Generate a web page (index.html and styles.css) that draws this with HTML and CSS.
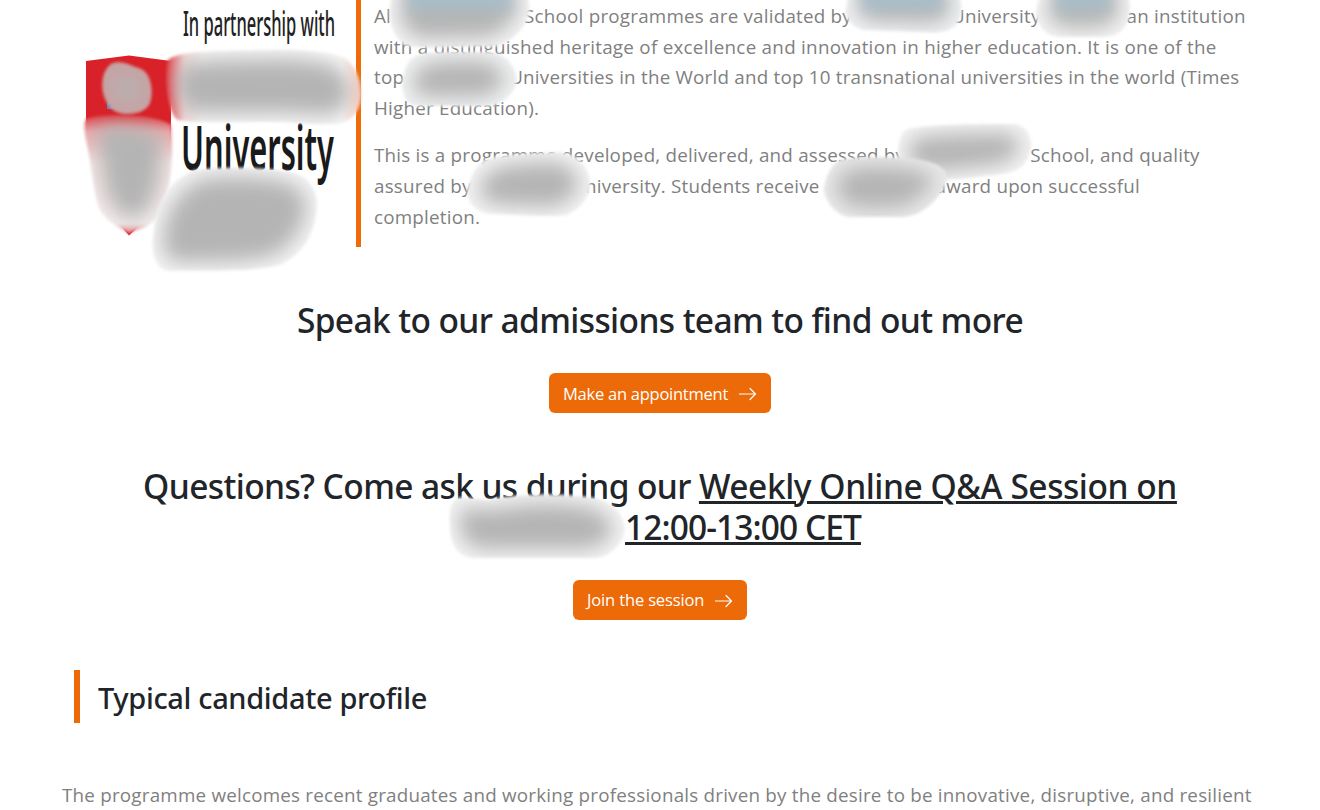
FILE: index.html
```html
<!DOCTYPE html>
<html lang="en">
<head>
<meta charset="utf-8">
<title>Programme</title>
<link rel="stylesheet" href="styles.css">
</head>
<body>
<main class="page">
  <section class="partner">
    <svg class="partner-logo" viewBox="0 0 356 247" width="356" height="247">
      <path fill="#d92129" d="M86 61L129 55.500L171 61V118C171 180 158 211 129 235.500C110 215 92 180 86 118Z"/>
      <rect x="107" y="101" width="8" height="8" fill="#6681b5"/>
      <text class="logo-small" x="183" y="36" textLength="152" lengthAdjust="spacingAndGlyphs">In partnership with</text>
      <text class="logo-big" x="181" y="170" textLength="153" lengthAdjust="spacingAndGlyphs">University</text>
    </svg>
    <div class="partner-text">
      <p>
        <span class="line">Al<i class="gap g-a"></i>School programmes are validated by<i class="gap g-b"></i>University<i class="gap g-c"></i>an institution</span>
        <span class="line wide">with a distinguished heritage of excellence and innovation in higher education. It is one of the</span>
        <span class="line">top<i class="gap g-d"></i>Universities in the World and top 10 transnational universities in the world (Times</span>
        <span class="line">Higher Education).</span>
      </p>
      <p>
        <span class="line">This is a programme developed, delivered, and assessed by<i class="gap g-e"></i>School, and quality</span>
        <span class="line">assured by<i class="gap g-f"></i>University. Students receive<i class="gap g-g"></i>award upon successful</span>
        <span class="line">completion.</span>
      </p>
    </div>
  </section>

  <section class="cta cta-first">
    <h2>Speak to our admissions team to find out more</h2>
    <a class="btn btn-appointment">Make an appointment
      <svg class="arrow" viewBox="0 0 18 14" width="18" height="14"><path d="M.5 7H16.500M11 1.500L16.500 7L11 12.500"/></svg></a>
  </section>

  <section class="cta cta-second">
    <h2>Questions? Come ask us during our <a class="session">Weekly Online Q&amp;A Session on</a><br><i class="gap g-h"></i><a class="session time">12:00-13:00 CET</a></h2>
    <a class="btn btn-join">Join the session
      <svg class="arrow" viewBox="0 0 18 14" width="18" height="14"><path d="M.5 7H16.500M11 1.500L16.500 7L11 12.500"/></svg></a>
  </section>

  <h3 class="profile-title">Typical candidate profile</h3>
  <p class="profile-text"><span class="line">The programme welcomes recent graduates and working professionals driven by the desire to be innovative, disruptive, and resilient</span></p>

  <svg class="smudges" viewBox="0 0 1320 810" width="1320" height="810">
    <defs>
      <filter id="soft" x="-5%" y="-10%" width="110%" height="120%" color-interpolation-filters="sRGB">
        <feGaussianBlur in="SourceGraphic" stdDeviation="1.500" result="base"/>
        <feMorphology in="SourceAlpha" operator="erode" radius="9"/>
        <feGaussianBlur stdDeviation="10" result="core"/>
        <feFlood flood-color="#b4b4b4"/>
        <feComposite in2="core" operator="in"/>
        <feComposite in2="base" operator="in" result="shade"/>
        <feMerge><feMergeNode in="base"/><feMergeNode in="shade"/></feMerge>
      </filter>
      <filter id="haze" x="-10%" y="-60%" width="120%" height="220%"><feGaussianBlur stdDeviation="6"/></filter>
      <linearGradient id="sky" gradientUnits="userSpaceOnUse" x1="0" y1="0" x2="0" y2="20"><stop offset="0" stop-color="#9fc0d0" stop-opacity=".75"/><stop offset="1" stop-color="#b4c4cc" stop-opacity="0"/></linearGradient>
      <linearGradient id="banner" gradientUnits="userSpaceOnUse" x1="165" y1="0" x2="361" y2="0"><stop offset="0" stop-color="#dc2a32"/><stop offset=".1" stop-color="#f2d8d8"/><stop offset=".2" stop-color="#f4f4f4"/><stop offset=".9" stop-color="#f7f7f7"/><stop offset="1" stop-color="#f9c9bb"/></linearGradient>
      <linearGradient id="robe" gradientUnits="userSpaceOnUse" x1="0" y1="114" x2="0" y2="236"><stop offset="0" stop-color="#d92e36"/><stop offset=".15" stop-color="#eda9ab"/><stop offset=".4" stop-color="#f5e4e4"/><stop offset=".9" stop-color="#f4eded"/><stop offset="1" stop-color="#df5a5f"/></linearGradient>
    </defs>
    <g filter="url(#soft)" fill="#f3f3f3"><path d="M395 -25H520C528 -10 532 12 527 20C519 35 507 46 490 47C460 45 430 50 408 46C394 42 388 20 390 8Z"/></g>
    <g filter="url(#soft)" fill="#f0f1f2"><path d="M407 65C412 53 425 53 445 52H490C506 53 516 68 517 79C516 91 505 104 490 106H418C404 106 403 92 402 83C403 76 404 70 407 65Z"/></g>
    <g filter="url(#soft)" fill="#eff1f2"><path d="M852 -25H950C962 -10 965 14 957 24C948 34 935 33 920 32C900 31 880 31 863 30C850 27 843 14 846 8Z"/></g>
    <g filter="url(#soft)" fill="#f3f3f3"><path d="M1045 -25H1120C1130 -10 1132 10 1128 21C1122 36 1110 37 1098 37H1060C1046 36 1040 28 1036 18C1034 8 1042 -5 1045 -25Z"/></g>
    <path filter="url(#haze)" fill="url(#sky)" d="M408 -12H510V16H408ZM862 -12H942V16H862ZM1056 -12H1110V16H1056Z"/>
    <g filter="url(#soft)" fill="#f3f3f3"><path d="M485 160C500 154 530 154 555 152C575 152 587 163 590 180C592 195 583 207 567 215C550 218 510 214 490 214C472 212 465 197 468 187C471 175 477 165 485 160Z"/></g>
    <g filter="url(#soft)" fill="#f3f3f3"><path d="M905 130C920 124 980 124 1015 124C1028 125 1034 142 1030 153C1025 171 1010 174 985 176C960 180 930 181 910 178C895 170 895 140 905 130Z"/></g>
    <g filter="url(#soft)" fill="#e9e9e9"><path d="M840 160C860 156 895 156 920 160C945 164 954 175 941 193C928 210 915 217 900 217H850C835 216 823 198 824 188C826 175 832 164 840 160Z"/></g>
    <g filter="url(#soft)" fill="#f3f3f3"><path d="M454 500C462 494 475 500 488 500C520 493 565 493 595 498C613 501 624 515 625 528C624 542 612 557 595 558H475C460 558 450 547 450 527C449 515 450 505 454 500Z"/></g>
    <g filter="url(#soft)" fill="url(#robe)"><path d="M86 119C100 113 154 113 171 125C174 155 171 190 160 215C150 227 137 230 129 233C120 228 106 222 99 208C93 190 91 160 86 140C84 130 84 123 86 119Z"/></g>
    <g filter="url(#soft)" fill="#c8a2a3"><path d="M111 64C121 59 131 66 141 69C151 73 154 92 150 103C145 116 115 119 108 104C100 93 100 72 111 64Z"/></g>
    <g filter="url(#soft)" fill="url(#banner)"><path d="M168 60C180 50 220 51 260 50C300 49 330 51 345 58C354 64 361 78 361 94C361 108 354 121 338 124C315 126 300 122 270 122C230 122 195 123 178 120C168 115 163 75 168 60Z"/></g>
    <g filter="url(#soft)" fill="#f3f3f3"><path d="M195 170C225 166 270 168 290 172C307 175 317 188 317 203C316 230 306 253 280 265C250 273 200 270 170 271C154 270 150 250 154 230C157 200 170 180 195 170Z"/></g>
  </svg>
</main>
</body>
</html>
```

FILE: styles.css
```css
* { box-sizing: border-box; }
body { margin: 0; background: #fff; color: #212529; font-family: "Open Sans", "Noto Sans", sans-serif; }
.page { position: relative; width: 1320px; height: 810px; overflow: hidden; display: flow-root; }
p, h2, h3 { margin: 0; }

.partner { display: flex; height: 247px; }
.partner-logo { flex: none; display: block; }
.logo-small { font: 500 34px "Noto Sans", sans-serif; fill: #222; }
.logo-big { font: 600 61px "Noto Sans", sans-serif; fill: #1a1a1a; }
.partner-text { flex: 1; border-left: 5px solid #ee6b07; padding: 1px 0 0 13px; }
.partner-text p { margin-bottom: 16.4px; }
.line { display: block; white-space: nowrap; font-size: 18.8px; line-height: 30.72px; letter-spacing: .225px; color: #808080; }
.wide { letter-spacing: .28px; }

.gap { display: inline-block; height: 1px; }
.g-a { width: 133px; }
.g-b { width: 99px; }
.g-c { width: 86px; }
.g-d { width: 105px; }
.g-e { width: 125px; }
.g-f { width: 99.500px; }
.g-g { width: 116px; }
.g-h { width: 166px; }

.cta { display: flex; flex-direction: column; align-items: center; text-align: center; }
.cta-first { padding-top: 53px; }
.cta-second { padding-top: 53px; }
h2 { font: 500 33.5px/41px "Noto Sans", sans-serif; letter-spacing: -.6px; white-space: nowrap; }
.session { text-decoration: underline; text-decoration-thickness: 3px; text-underline-offset: 2px; letter-spacing: -.44px; }
.time { letter-spacing: -.92px; }
.btn { display: flex; align-items: center; justify-content: space-between; height: 40px; margin-top: 32px; padding: 0 14px; border-radius: 6px; background: #ed6a08; color: #fff; font-size: 16.5px; letter-spacing: -.25px; white-space: nowrap; }
.btn-appointment { width: 222px; }
.btn-join { width: 174px; padding-bottom: 1px; letter-spacing: -.15px; }
.arrow { fill: none; stroke: #fff; stroke-width: 1.2; stroke-linecap: round; stroke-linejoin: round; margin-top: 2px; }

.profile-title { width: max-content; height: 53px; margin: 50px 0 0 74px; padding-left: 18px; border-left: 6px solid #ed6a08; font: 500 29px/55px "Noto Sans", sans-serif; letter-spacing: -.35px; }
.profile-text { margin: 57px 0 0 62px; }

.smudges { position: absolute; inset: 0; pointer-events: none; }
```
